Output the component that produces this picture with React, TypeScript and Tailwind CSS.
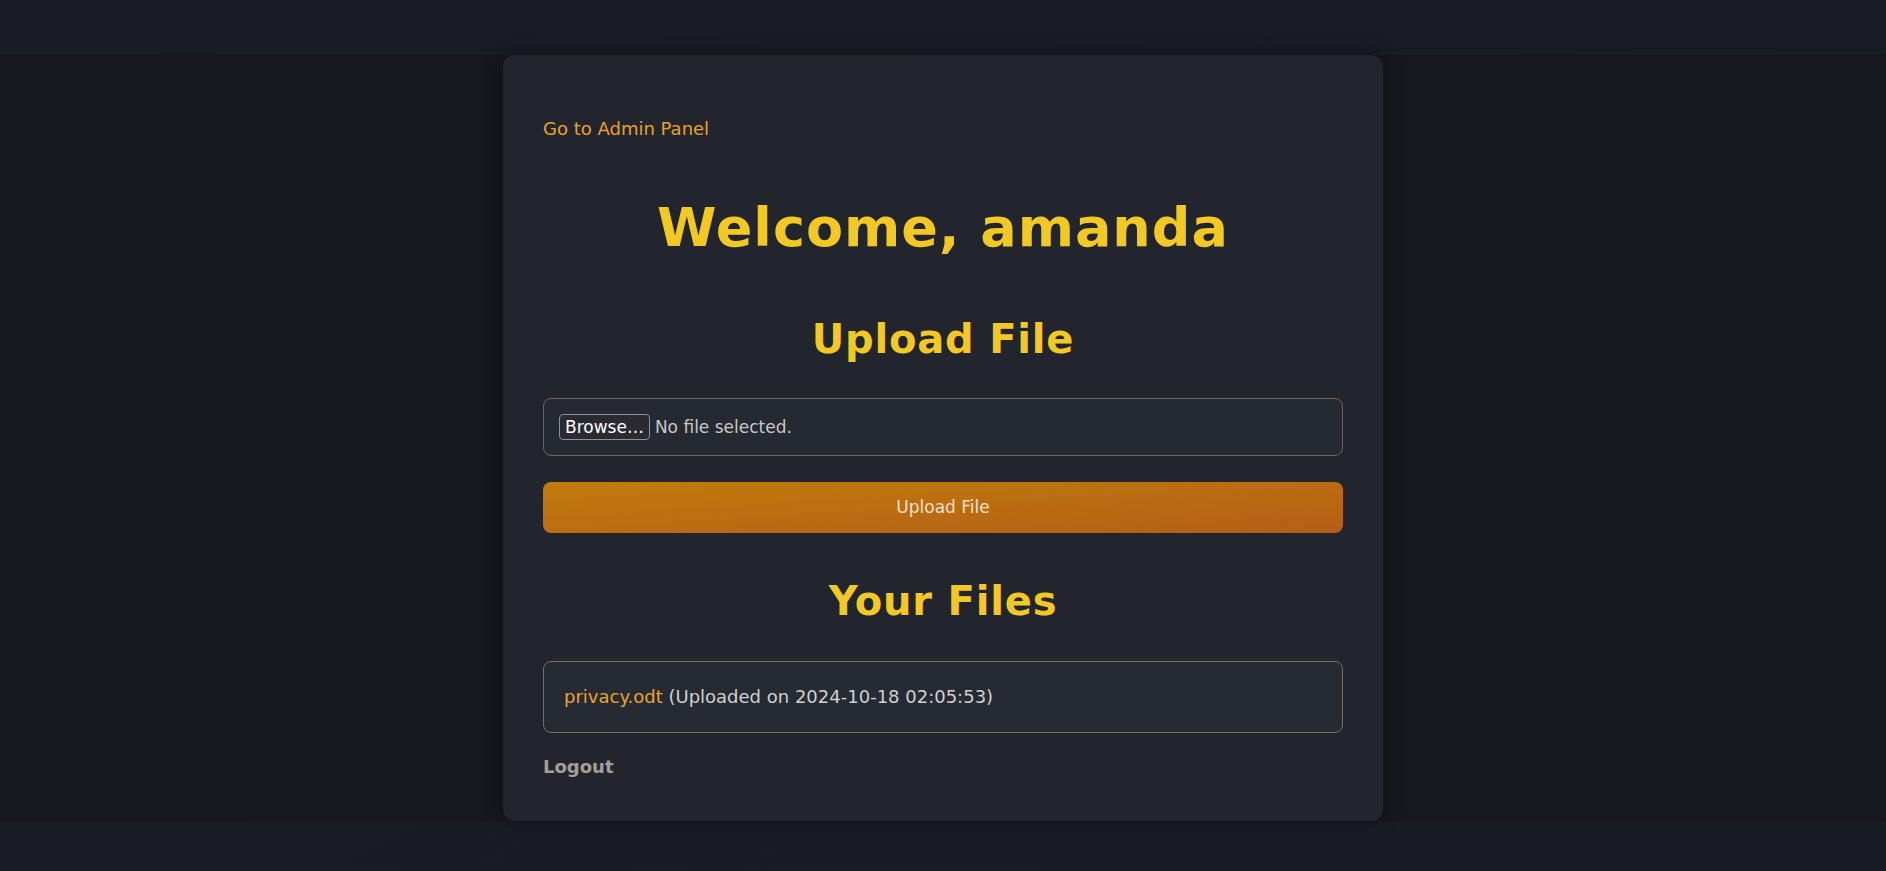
import React from "react";

const files = [{ name: "privacy.odt", uploaded: "2024-10-18 02:05:53" }];

export default function App() {
  return (
    <div className="min-h-screen bg-linear-to-br from-[#191c23] to-[#181b24] pt-[55px] pb-[50px] font-['DejaVu_Sans',sans-serif]">
      <div className="flex justify-center bg-[#16181d]">
        <div className="w-[880px] rounded-[12px] bg-[#22252e] px-[40px] pt-[40px] pb-[42px] shadow-[0_0_18px_rgba(0,0,0,0.35)]">
          <a href="#" className="mt-[22px] block text-[18px] leading-[24px] text-[#e9a126]">
            Go to Admin Panel
          </a>

          <h1 className="mt-[55px] text-center text-[54px] leading-[64px] font-bold tracking-[1px] text-[#f2c824]">
            Welcome, amanda
          </h1>

          <h2 className="mt-[55px] text-center text-[40px] leading-[48px] font-bold tracking-[0.8px] text-[#f2c824]">
            Upload File
          </h2>

          {/* file picker */}
          <div className="mt-[35px] flex items-center rounded-[8px] border border-[#6b675f] bg-[#252932] p-[15px]">
            <span className="h-[26px] rounded-[4px] border border-[#8f8f9d] bg-[#2b2a33] px-[5px] text-[17px] leading-[24px] text-white">
              Browse…
            </span>
            <span className="ml-[5px] text-[17px] leading-[26px] text-[#c8c8c8]">No file selected.</span>
          </div>

          <button className="mt-[26px] h-[51px] w-full rounded-[8px] bg-linear-to-br from-[#c27b0c] to-[#b45e15] text-[17px] text-[#eee0c8]">
            Upload File
          </button>

          <h2 className="mt-[44px] text-center text-[40px] leading-[48px] font-bold tracking-[0.8px] text-[#f2c824]">
            Your Files
          </h2>

          <ul className="mt-[36px]">
            {files.map((f) => (
              <li
                key={f.name}
                className="rounded-[8px] border border-[#766f64] bg-[#262a33] py-[21px] pl-[20px] text-[18px] leading-[28px] text-[#d0d0d0]"
              >
                <a href="#" className="text-[#eba52b]">
                  {f.name}
                </a>{" "}
                (Uploaded on {f.uploaded})
              </li>
            ))}
          </ul>

          <a href="#" className="mt-[22px] block text-[18px] leading-[24px] font-bold text-[#a59f96]">
            Logout
          </a>
        </div>
      </div>
    </div>
  );
}
